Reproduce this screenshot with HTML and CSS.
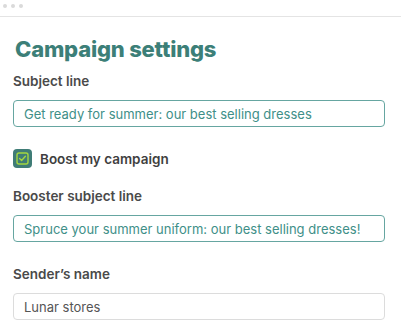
FILE: index.html
```html
<!DOCTYPE html>
<html lang="en">
<head>
<meta charset="utf-8">
<title>Campaign settings</title>
<link rel="stylesheet" href="styles.css">
</head>
<body>
<div class="chrome">
  <span class="dot"></span><span class="dot"></span><span class="dot"></span>
</div>
<main class="panel">
  <h1 class="title">Campaign settings</h1>
  <div class="field">
    <div class="label">Subject line</div>
    <div class="input active">Get ready for summer: our best selling dresses</div>
  </div>
  <div class="check-row">
    <span class="checkbox">
      <svg viewBox="0 0 19 19" width="19" height="19">
        <rect x="4" y="4" width="11" height="11" rx="2" fill="none" stroke="#a3d640" stroke-width="1.4"/>
        <path d="M6.6 9.6 L8.6 11.5 L12.4 7.3" fill="none" stroke="#a3d640" stroke-width="1.4" stroke-linecap="round" stroke-linejoin="round"/>
      </svg>
    </span>
    <span class="check-label">Boost my campaign</span>
  </div>
  <div class="field">
    <div class="label">Booster subject line</div>
    <div class="input active">Spruce your summer uniform: our best selling dresses!</div>
  </div>
  <div class="field sender">
    <div class="label">Sender’s name</div>
    <div class="input plain">Lunar stores</div>
  </div>
</main>
</body>
</html>
```
FILE: styles.css
```css
html, body {
  margin: 0;
  padding: 0;
  background: #ffffff;
}
body {
  font-family: Inter, "Noto Sans", sans-serif;
  width: 401px;
  height: 336px;
  overflow: hidden;
}
.chrome {
  height: 17px;
  border-bottom: 1px solid #e4e4e4;
  display: flex;
  align-items: flex-start;
  gap: 4px;
  padding: 4px 0 0 3px;
  box-sizing: border-box;
}
.dot {
  width: 4px;
  height: 4px;
  border-radius: 50%;
  background: #dadada;
}
.panel {
  padding: 18px 16px 0 13px;
}
.title {
  margin: 0 0 9px 2px;
  font-size: 22px;
  line-height: 28px;
  font-weight: 800;
  color: #3c7f78;
  letter-spacing: -0.2px;
}
.field {
  display: flex;
  flex-direction: column;
}
.field.sender {
  margin-top: 23px;
}
.label {
  font-size: 13.5px;
  line-height: 18px;
  font-weight: 600;
  color: #4a4a4a;
  margin: 0 0 10px;
}
.input {
  height: 27px;
  box-sizing: border-box;
  border-radius: 4px;
  padding: 0 10px;
  display: flex;
  align-items: center;
  font-size: 13px;
  white-space: nowrap;
  overflow: hidden;
}
.input.active {
  border: 1.5px solid #66a6a1;
  color: #408f88;
}
.input.plain {
  border: 1px solid #dcdcdc;
  color: #555555;
}
.check-row {
  display: flex;
  align-items: center;
  gap: 8px;
  margin: 22px 0 19px;
}
.checkbox {
  width: 19px;
  height: 19px;
  border-radius: 4px;
  background: #3f7c76;
  display: flex;
}
.check-label {
  font-size: 13.5px;
  line-height: 18px;
  font-weight: 600;
  color: #3f3f3f;
}
```
